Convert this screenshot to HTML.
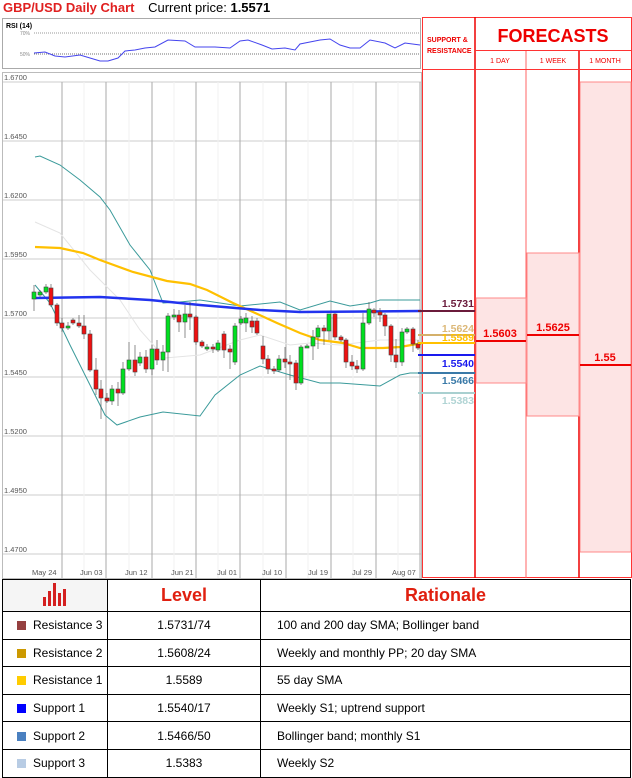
<!DOCTYPE html>
<html><head><meta charset="utf-8"><style>
body{margin:0;width:632px;height:778px;background:#fff;position:relative;overflow:hidden;font-family:"Liberation Sans",sans-serif}
.abs{position:absolute}
table{border-collapse:collapse;position:absolute;left:2px;top:579px;width:629px;table-layout:fixed}
td{border:1px solid #000;height:26.6px;font-size:12px;padding:0;white-space:nowrap;overflow:hidden}
.sq{display:inline-block;width:9px;height:9px;margin:0 7px 0 14px;vertical-align:-1px}
</style></head><body>
<div class="abs" style="left:3px;top:0;font-size:13px;font-weight:bold;color:#e02020;">GBP/USD Daily Chart <span style="color:#000;font-weight:normal;margin-left:10px">Current price: <b>1.5571</b></span></div>
<svg class="abs" style="left:0;top:0" width="632" height="580">
<rect x="2.5" y="18.5" width="418" height="50" fill="#fff" stroke="#aaa"/>
<text x="6" y="28" font-size="7" font-weight="bold" fill="#000">RSI (14)</text>
<text x="20" y="35" font-size="5" fill="#888">70%</text><text x="20" y="56" font-size="5" fill="#888">50%</text>
<line x1="34" y1="33" x2="420" y2="33" stroke="#777" stroke-dasharray="1,1" stroke-width="0.7"/>
<line x1="34" y1="54" x2="420" y2="54" stroke="#444" stroke-dasharray="1,1" stroke-width="0.7"/>
<polyline fill="none" stroke="#4444ee" stroke-width="1" points="34,53 45,52 55,56 65,57 80,55 90,58 100,61 108,61 118,58 125,51 135,50 145,48 155,47 168,40 185,41 195,47 215,47 230,48 240,41 248,40 262,45 272,49 285,48 295,50 300,44 320,40 330,39 340,45 350,48 360,48 370,40 385,43 395,48 405,43 420,45"/>
<rect x="2.5" y="72.5" width="419" height="506" fill="#fff" stroke="#bbb"/>
<g stroke="#ccc" stroke-width="1">
<line x1="3" y1="82" x2="421" y2="82"/><line x1="3" y1="141" x2="421" y2="141"/><line x1="3" y1="200" x2="421" y2="200"/><line x1="3" y1="259" x2="421" y2="259"/><line x1="3" y1="318" x2="421" y2="318"/><line x1="3" y1="377" x2="421" y2="377"/><line x1="3" y1="436" x2="421" y2="436"/><line x1="3" y1="495" x2="421" y2="495"/><line x1="3" y1="554" x2="421" y2="554"/>
</g>
<g stroke="#f2f2f2"><line x1="84" y1="82" x2="84" y2="578"/><line x1="129" y1="82" x2="129" y2="578"/><line x1="174" y1="82" x2="174" y2="578"/><line x1="218" y1="82" x2="218" y2="578"/><line x1="263" y1="82" x2="263" y2="578"/><line x1="308" y1="82" x2="308" y2="578"/><line x1="353" y1="82" x2="353" y2="578"/><line x1="398" y1="82" x2="398" y2="578"/></g>
<g stroke="#aaa"><line x1="62" y1="82" x2="62" y2="578"/><line x1="106" y1="82" x2="106" y2="578"/><line x1="152" y1="82" x2="152" y2="578"/><line x1="196" y1="82" x2="196" y2="578"/><line x1="240" y1="82" x2="240" y2="578"/><line x1="286" y1="82" x2="286" y2="578"/><line x1="331" y1="82" x2="331" y2="578"/><line x1="376" y1="82" x2="376" y2="578"/><line x1="420" y1="82" x2="420" y2="578"/></g>
<g font-size="7.5" fill="#555"><text x="4" y="80">1.6700</text><text x="4" y="139">1.6450</text><text x="4" y="198">1.6200</text><text x="4" y="257">1.5950</text><text x="4" y="316">1.5700</text><text x="4" y="375">1.5450</text><text x="4" y="434">1.5200</text><text x="4" y="493">1.4950</text><text x="4" y="552">1.4700</text></g>
<g font-size="7.5" fill="#555"><text x="32" y="575">May 24</text><text x="80" y="575">Jun 03</text><text x="125" y="575">Jun 12</text><text x="171" y="575">Jun 21</text><text x="217" y="575">Jul 01</text><text x="262" y="575">Jul 10</text><text x="308" y="575">Jul 19</text><text x="352" y="575">Jul 29</text><text x="392" y="575">Aug 07</text></g>
<polyline fill="none" stroke="#e4e4e4" stroke-width="1" points="35,222 60,233 90,270 120,300 140,330 165,358 200,355 240,340 260,335 290,345 310,343 340,345 380,340 420,340"/>
<polyline fill="none" stroke="#3a9a9a" stroke-width="1" points="35,157 40,156 60,165 80,180 100,197 110,210 130,245 150,270 163,303 180,302 200,300 240,306 280,302 300,310 330,301 350,306 370,303 380,300 420,300"/>
<polyline fill="none" stroke="#3a9a9a" stroke-width="1" points="35,285 50,303 70,345 90,385 105,415 117,425 140,417 163,412 200,416 215,395 240,375 260,366 290,375 320,383 340,383 380,386 400,375 410,373 420,373"/>
<polyline fill="none" stroke="#ffc000" stroke-width="2.2" points="35,247 60,248 83,253 100,260 133,272 167,281 190,284 207,290 233,303 253,312 277,323 300,333 320,340 343,343 360,348 383,348 400,347 417,344 421,344"/>
<polyline fill="none" stroke="#2233ee" stroke-width="2.5" points="35,298 100,297 150,300 200,305 260,310 300,312 421,311"/>
<g id="c" stroke="#444" stroke-width="0.6"></g>
<rect x="422.5" y="17.5" width="209" height="560" fill="none" stroke="#f33"/>
<line x1="475" y1="17" x2="475" y2="578" stroke="#e00" stroke-width="1.5"/>
<line x1="526" y1="50" x2="526" y2="578" stroke="#f66"/>
<line x1="579" y1="50" x2="579" y2="578" stroke="#e00" stroke-width="1.5"/>
<line x1="475" y1="50.5" x2="632" y2="50.5" stroke="#f33"/>
<line x1="422" y1="69.5" x2="632" y2="69.5" stroke="#f33"/>
<text x="427" y="42" font-size="7" font-weight="bold" fill="#e00">SUPPORT &amp;</text>
<text x="427" y="53" font-size="7" font-weight="bold" fill="#e00">RESISTANCE</text>
<text x="553" y="42" font-size="18" font-weight="bold" fill="#e00" text-anchor="middle">FORECASTS</text>
<text x="500" y="63" font-size="7" fill="#e00" text-anchor="middle">1 DAY</text>
<text x="553" y="63" font-size="7" fill="#e00" text-anchor="middle">1 WEEK</text>
<text x="605" y="63" font-size="7" fill="#e00" text-anchor="middle">1 MONTH</text>
<rect x="476" y="298" width="50" height="85" fill="#fde4e4" stroke="#f88"/>
<rect x="527" y="253" width="52" height="163" fill="#fde4e4" stroke="#f88"/>
<rect x="580" y="82" width="51" height="470" fill="#fde4e4" stroke="#f88"/>
<line x1="476" y1="341" x2="526" y2="341" stroke="#e00" stroke-width="2"/>
<line x1="527" y1="335" x2="579" y2="335" stroke="#e00" stroke-width="2"/>
<line x1="580" y1="365" x2="631" y2="365" stroke="#e00" stroke-width="2"/>
<g font-size="11" font-weight="bold" fill="#e00" text-anchor="middle"><text x="500" y="337">1.5603</text><text x="553" y="331">1.5625</text><text x="605" y="361">1.55</text></g>
<g stroke-width="2"><line x1="418" y1="311" x2="475" y2="311" stroke="#6b1b3b"/><line x1="418" y1="335" x2="475" y2="335" stroke="#d4b06a"/><line x1="418" y1="343" x2="475" y2="343" stroke="#ffc000"/><line x1="418" y1="355" x2="475" y2="355" stroke="#1a1aee"/><line x1="418" y1="373" x2="475" y2="373" stroke="#3a7aa8"/><line x1="418" y1="393" x2="475" y2="393" stroke="#a9d0d0"/></g>
<g font-size="10.5" font-weight="bold" text-anchor="end"><text x="474" y="307" fill="#6b1b3b">1.5731</text><text x="474" y="332" fill="#dcb878">1.5624</text><text x="474" y="341" fill="#ffc000">1.5589</text><text x="474" y="367" fill="#1a1aee">1.5540</text><text x="474" y="384" fill="#3a7aa8">1.5466</text><text x="474" y="404" fill="#b0d4d4">1.5383</text></g>
</svg>
<table>
<colgroup><col style="width:105px"><col style="width:153px"><col></colgroup>
<tr><td style="height:31px;text-align:center;background:#f5f5f5"><svg width="28" height="26" viewBox="0 0 28 26"><g fill="#d42020"><rect x="2" y="16" width="3" height="9"/><rect x="7" y="10" width="3" height="15"/><rect x="12" y="2" width="3" height="23"/><rect x="17" y="12" width="3" height="13"/><rect x="22" y="8" width="3" height="17"/></g></svg></td><td style="text-align:center;font-size:18px;font-weight:bold;color:#e02010">Level</td><td style="text-align:center;font-size:18px;font-weight:bold;color:#e02010">Rationale</td></tr>
<tr><td><span class="sq" style="background:#954040"></span>Resistance 3</td><td align="center">1.5731/74</td><td style="padding-left:16px">100 and 200 day SMA; Bollinger band</td></tr>
<tr><td><span class="sq" style="background:#cc9900"></span>Resistance 2</td><td align="center">1.5608/24</td><td style="padding-left:16px">Weekly and monthly PP; 20 day SMA</td></tr>
<tr><td><span class="sq" style="background:#ffcc00"></span>Resistance 1</td><td align="center">1.5589</td><td style="padding-left:16px">55 day SMA</td></tr>
<tr><td><span class="sq" style="background:#0000ff"></span>Support 1</td><td align="center">1.5540/17</td><td style="padding-left:16px">Weekly S1; uptrend support</td></tr>
<tr><td><span class="sq" style="background:#4a80c0"></span>Support 2</td><td align="center">1.5466/50</td><td style="padding-left:16px">Bollinger band; monthly S1</td></tr>
<tr><td><span class="sq" style="background:#b8cce4"></span>Support 3</td><td align="center">1.5383</td><td style="padding-left:16px">Weekly S2</td></tr>
</table>
<script>
var d=[[34,'g',292,299,285,311],[40,'g',292,295,290,297],[46,'g',287,292,284,294],[51,'r',288,305,284,307],[57,'r',305,323,303,326],[62,'r',323,328,318,332],[68,'g',326,328,322,330],[73,'r',320,323,318,325],[79,'r',323,326,315,328],[84,'r',326,334,315,339],[90,'r',334,370,330,372],[96,'r',370,389,358,395],[101,'r',389,398,380,419],[107,'r',398,401,393,403],[112,'g',389,401,385,405],[118,'r',389,393,382,406],[123,'g',369,393,362,395],[129,'g',360,369,342,371],[135,'r',360,372,345,376],[140,'g',357,363,352,366],[146,'r',357,369,350,373],[152,'g',349,369,345,375],[157,'r',349,360,340,365],[163,'g',352,360,345,371],[168,'g',316,352,313,372],[174,'g',315,317,309,320],[179,'r',315,322,310,332],[185,'g',314,322,305,338],[190,'r',314,317,302,330],[196,'r',317,342,315,345],[202,'r',342,346,340,348],[207,'g',347,349,344,351],[213,'r',347,349,344,353],[218,'g',343,350,340,352],[224,'r',334,350,331,358],[230,'r',349,352,345,369],[235,'g',326,362,323,365],[241,'g',319,323,316,325],[246,'g',318,323,313,332],[252,'r',321,327,316,333],[257,'r',321,333,318,335],[263,'r',346,359,336,364],[268,'r',359,369,355,374],[274,'r',369,371,366,374],[279,'g',359,370,355,372],[285,'r',359,362,347,368],[290,'r',362,363,355,380],[296,'r',363,383,360,390],[301,'g',347,383,345,385],[307,'g',346,347,344,348],[313,'g',337,346,330,360],[318,'g',328,337,325,349],[324,'r',328,331,325,345],[329,'g',314,331,314,340],[335,'r',314,337,313,340],[341,'r',337,340,335,342],[346,'r',340,362,338,368],[352,'r',362,366,355,370],[357,'r',366,369,360,373],[363,'g',323,369,313,371],[369,'g',309,323,302,325],[374,'r',310,313,308,317],[380,'r',312,315,308,322],[385,'r',315,326,313,336],[391,'r',326,355,324,362],[396,'r',355,362,339,368],[402,'g',332,362,328,366],[407,'g',329,332,327,334],[413,'r',329,344,327,352],[418,'r',344,348,340,350]];
var s='';d.forEach(function(c){s+='<line x1="'+c[0]+'" x2="'+c[0]+'" y1="'+c[4]+'" y2="'+c[5]+'"/><rect x="'+(c[0]-2)+'" y="'+c[2]+'" width="4" height="'+Math.max(2,c[3]-c[2])+'" fill="'+(c[1]=='g'?'#00e020':'#ee1111')+'"/>';});
document.getElementById('c').innerHTML=s;
</script>
</body></html>
